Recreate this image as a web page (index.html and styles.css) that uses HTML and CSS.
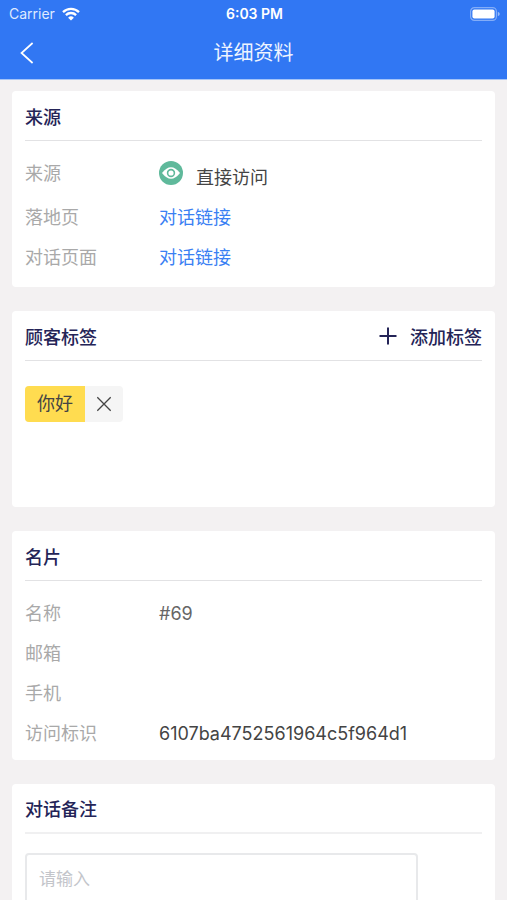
FILE: index.html
```html
<!DOCTYPE html>
<html lang="zh-CN">
<head>
<meta charset="utf-8">
<meta name="viewport" content="width=device-width, initial-scale=1">
<title>详细资料</title>
<link rel="stylesheet" href="styles.css">
</head>
<body>
<header class="top">
  <div class="status">
    <div class="carrier">
      <span>Carrier</span>
      <svg class="wifi" viewBox="0 0 18 14" aria-hidden="true">
        <path d="M1 5.2a11.5 11.5 0 0 1 16 0M3.9 8.1a7.3 7.3 0 0 1 10.2 0" fill="none" stroke="currentColor" stroke-width="2.3"/>
        <path d="M9 13.6 6.1 10.7a4.1 4.1 0 0 1 5.8 0z" fill="currentColor"/>
      </svg>
    </div>
    <span class="time">6:03 PM</span>
    <svg class="battery" viewBox="0 0 30 14" aria-hidden="true">
      <rect x=".6" y=".6" width="25.8" height="12.8" rx="3.8" fill="none" stroke="#fff" stroke-opacity=".4" stroke-width="1.2"/>
      <rect x="2.4" y="2.4" width="22.2" height="9.2" rx="2" fill="#fff"/>
      <path d="M27.8 4.8q2 .8 2 2.2t-2 2.2z" fill="#fff" fill-opacity=".5"/>
    </svg>
  </div>
  <nav class="nav">
    <button class="back" type="button" aria-label="返回">
      <svg viewBox="0 0 14 22" aria-hidden="true"><path d="M12.6 1 1.5 11l11.1 10" fill="none" stroke="currentColor" stroke-width="1.7"/></svg>
    </button>
    <h1 class="title">详细资料</h1>
  </nav>
</header>
<main class="content">
  <section class="card">
    <div class="head"><h2>来源</h2></div>
    <dl class="rows roomy">
      <div class="row tall">
        <dt>来源</dt>
        <dd class="source">
          <svg class="eye" viewBox="0 0 24 24" aria-hidden="true">
            <circle cx="12" cy="12" r="12" fill="#5fb99b"/>
            <path d="M3 12q9-11.6 18 0-9 11.6-18 0z" fill="#fff"/>
            <circle cx="12" cy="12" r="3.4" fill="#fff" stroke="#5fb99b" stroke-width="1.6"/>
          </svg>
          <span>直接访问</span>
        </dd>
      </div>
      <div class="row"><dt>落地页</dt><dd><a href="#landing">对话链接</a></dd></div>
      <div class="row"><dt>对话页面</dt><dd><a href="#chat">对话链接</a></dd></div>
    </dl>
  </section>

  <section class="card">
    <div class="head">
      <h2>顾客标签</h2>
      <button class="add" type="button">
        <svg viewBox="0 0 18 18" aria-hidden="true"><path d="M9 .5v17M.5 9h17" stroke="currentColor" stroke-width="2"/></svg>
        <span>添加标签</span>
      </button>
    </div>
    <div class="tags">
      <div class="tag">
        <span class="tag-name">你好</span>
        <button class="tag-remove" type="button" aria-label="删除标签">
          <svg viewBox="0 0 16 16" aria-hidden="true"><path d="m1.3 1.3 13.4 13.4m0-13.4L1.3 14.7" stroke="currentColor" stroke-width="1.3"/></svg>
        </button>
      </div>
    </div>
  </section>

  <section class="card">
    <div class="head"><h2>名片</h2></div>
    <dl class="rows">
      <div class="row"><dt>名称</dt><dd class="muted">#69</dd></div>
      <div class="row"><dt>邮箱</dt><dd></dd></div>
      <div class="row"><dt>手机</dt><dd></dd></div>
      <div class="row"><dt>访问标识</dt><dd>6107ba4752561964c5f964d1</dd></div>
    </dl>
  </section>

  <section class="card">
    <div class="head thick"><h2><label for="note">对话备注</label></h2></div>
    <div class="note-wrap"><textarea id="note" class="note" placeholder="请输入"></textarea></div>
  </section>
</main>
</body>
</html>
```
FILE: styles.css
```css
* {
  box-sizing: border-box;
}

body {
  margin: 0;
  height: 100vh;
  display: flex;
  flex-direction: column;
  overflow: hidden;
  background: #f3f1f2;
  color: #444;
  font-family: Inter, "Noto Sans CJK SC", sans-serif;
  font-size: 18px;
}

h1, h2, dl, dd {
  margin: 0;
}

button {
  padding: 0;
  border: 0;
  background: none;
  color: inherit;
  font: inherit;
}

svg {
  display: block;
}

.top {
  flex: none;
  background: #3177f3;
  border-bottom: 1px solid #a5c4f8;
  color: #fff;
}

.status {
  display: grid;
  grid-template-columns: 1fr auto 1fr;
  align-items: center;
  height: 27px;
  padding: 0 7px 0 9px;
  font-size: 14px;
}

.carrier {
  display: flex;
  align-items: center;
  gap: 7px;
  color: #dfeaff;
}

.wifi {
  width: 18px;
  height: 14px;
  color: #fff;
}

.time {
  font-weight: 600;
}

.battery {
  width: 30px;
  height: 14px;
  justify-self: end;
}

.nav {
  display: grid;
  grid-template-columns: 1fr auto 1fr;
  align-items: center;
  height: 52px;
}

.back {
  justify-self: start;
  padding: 8px 20px;
}

.back svg {
  width: 14px;
  height: 22px;
}

.title {
  color: #eef4ff;
  font-size: 20px;
  font-weight: 400;
  line-height: 52px;
}

.content {
  flex: 1;
  min-height: 0;
  display: flex;
  flex-direction: column;
  gap: 24px;
  padding: 11px 12px 24px;
  overflow-y: auto;
  scrollbar-width: none;
}

.card {
  flex: none;
  background: #fff;
  border-radius: 4px;
}

.head {
  display: flex;
  align-items: center;
  justify-content: space-between;
  height: 50px;
  margin: 0 13px;
  border-bottom: 1px solid #e2e2e4;
  color: #242457;
}

.head.thick {
  border-bottom: 2px solid #f0f0f1;
}

h2 {
  font-size: 18px;
  font-weight: 500;
}

.add {
  display: flex;
  align-items: center;
  gap: 13px;
  font-weight: 500;
}

.add svg {
  width: 18px;
  height: 18px;
}

.rows {
  padding: 13px 13px 6px;
}

.roomy {
  padding-bottom: 9px;
}

.row {
  display: grid;
  grid-template-columns: 134px 1fr;
  line-height: 40px;
  min-height: 40px;
}

.row dt {
  color: #a9a9a9;
}

.row a {
  color: #3a80f3;
  text-decoration: none;
}

.tall {
  min-height: 44px;
}

.source {
  display: flex;
  gap: 13px;
}

.source span {
  padding-top: 4px;
}

.eye {
  width: 24px;
  height: 24px;
  margin-top: 7px;
}

.muted {
  color: #666;
}

.tags {
  min-height: 146px;
  padding: 25px 13px;
}

.tag {
  display: inline-flex;
  height: 36px;
  border-radius: 4px;
  overflow: hidden;
  background: #f5f5f5;
}

.tag-name {
  padding: 0 12px;
  background: #ffdc50;
  line-height: 36px;
}

.tag-remove {
  padding: 0 11px;
}

.tag-remove svg {
  width: 16px;
  height: 16px;
}

.note-wrap {
  padding: 19px 13px 24px;
}

.note {
  display: block;
  width: 86%;
  height: 120px;
  padding: 12px;
  border: 2px solid #e8e9eb;
  border-radius: 4px;
  background: #fff;
  color: #444;
  font: inherit;
  font-size: 17px;
  line-height: 24px;
  resize: none;
}

.note::placeholder {
  color: #c3c5ca;
}
```
